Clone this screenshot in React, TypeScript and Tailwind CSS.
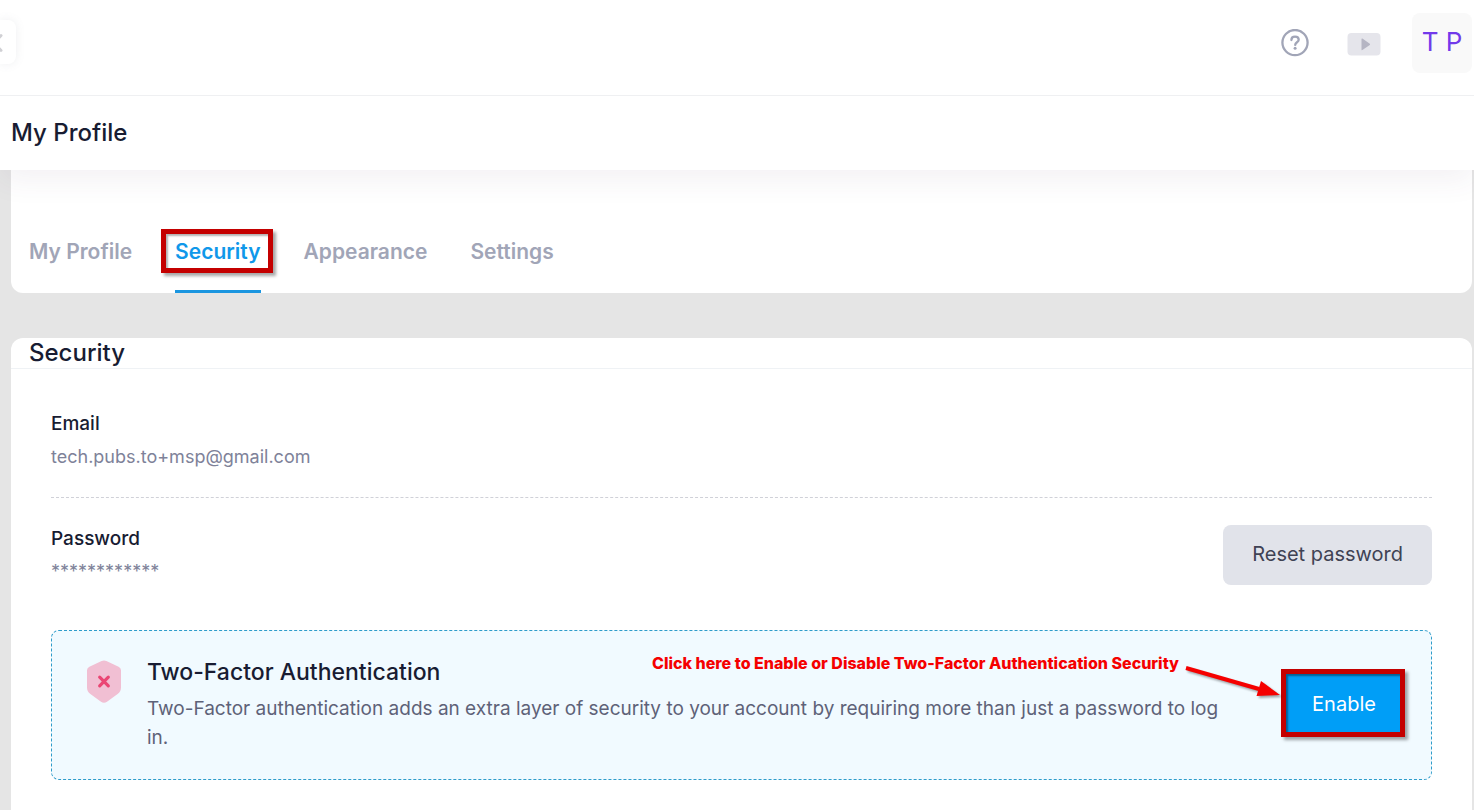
import React, { useState } from 'react';

const TABS = ['My Profile', 'Security', 'Appearance', 'Settings'];

const HelpIcon = () => (
  <svg width="28" height="28" viewBox="0 0 28 28" fill="none" stroke="#a1a5b7" aria-hidden="true">
    <circle cx="14" cy="13.600" r="12.6" strokeWidth="2.3" />
    <path d="M10.4 11c0-2 1.6-3.300 3.6-3.300s3.700 1.200 3.700 3.100c0 2.400-3.500 2.500-3.500 5.100" strokeWidth="2.300" strokeLinecap="round" />
    <circle cx="14.1" cy="19.300" r="1.500" fill="#a1a5b7" stroke="none" />
  </svg>
);

const VideoIcon = () => (
  <svg width="34" height="24" viewBox="0 0 34 24" aria-hidden="true">
    <rect x="0.5" y="1" width="33" height="22.5" rx="4" fill="#e5e5eb" />
    <path d="M14.500 7v10.700c0 .5.5.7.9.4l7.400-5.200c.4-.3.4-.8 0-1.100l-7.400-5.200c-.4-.3-.9-.1-.9.4z" fill="#b5b5c3" />
  </svg>
);

const ShieldIcon = () => (
  <svg width="34" height="44" viewBox="0 0 34 44" className="mt-1 shrink-0" aria-hidden="true">
    <path
      d="M14.6 1.1a6 6 0 0 1 4.8 0l12.2 5.6A4 4 0 0 1 34 10.300V27.500a8 8 0 0 1-3.400 6.500L20 41.700a5.200 5.200 0 0 1-6 0L3.400 34A8 8 0 0 1 0 27.500V10.300a4 4 0 0 1 2.400-3.600z"
      fill="#f1bfd3"
    />
    <path d="M12.700 17.200l8.600 8.600M21.300 17.200l-8.600 8.600" stroke="#ea4674" strokeWidth="3.200" strokeLinecap="round" />
  </svg>
);

const Arrow = () => (
  <svg width="96" height="36" viewBox="0 0 96 36" className="drop-shadow-[2px_2px_1px_rgba(0,0,0,0.35)]" aria-hidden="true">
    <path d="M1 3L74 24" stroke="#f50000" strokeWidth="4" />
    <path d="M76 16L95 30L71.500 31z" fill="#f50000" />
  </svg>
);

const Header: React.FC = () => (
  <header className="relative z-20 flex h-24 items-center justify-between border-b border-[#eff0f2] bg-white">
    <button
      aria-label="Collapse menu"
      className="-mt-3 flex h-11 w-4 items-center justify-start overflow-hidden rounded-r-lg bg-white shadow-[0_0_10px_rgba(113,121,136,0.12)]"
    >
      <svg width="4" height="22" viewBox="0 0 4 22" fill="none" stroke="#d0d0d4" strokeWidth="3" strokeLinecap="round" aria-hidden="true">
        <path d="M1 4.500L-6 12L1 19.500" />
      </svg>
    </button>
    <div className="-mt-2.5 flex items-center pr-0.5">
      <button aria-label="Help">
        <HelpIcon />
      </button>
      <button aria-label="Videos" className="mt-0.5 ml-[38px]">
        <VideoIcon />
      </button>
      <button className="ml-[31px] h-[60px] w-[60px] rounded-lg bg-[#f9f9f9] pb-0.5 text-[26px] whitespace-nowrap text-[#7239ea]">
        T P
      </button>
    </div>
  </header>
);

const App: React.FC = () => {
  const [activeTab, setActiveTab] = useState('Security');
  const [enabled, setEnabled] = useState(false);

  return (
    <div className="flex min-h-screen flex-col bg-[#e5e5e5] font-['Inter',sans-serif] text-[#181c32]">
      <Header />
      <div className="relative z-10 flex h-[74px] items-center bg-white px-[11px] shadow-[0_10px_30px_rgba(82,63,105,0.07)]">
        <h1 className="text-2xl font-medium">My Profile</h1>
      </div>

      <main className="flex grow flex-col gap-[45px] pr-0.5 pl-[11px]">
        <nav className="flex gap-[43px] rounded-b-xl bg-white px-[18px] pt-[42px]">
          {TABS.map((tab) => (
            <div key={tab} className="relative">
              <button
                onClick={() => setActiveTab(tab)}
                className={`h-[81px] border-b-3 pt-0.5 text-[21px] font-semibold ${
                  tab === activeTab ? 'border-[#1b96e0] text-[#0f98ea]' : 'border-transparent text-[#a1a5b7]'
                }`}
              >
                {tab}
              </button>
              {tab === 'Security' && (
                <span className="pointer-events-none absolute top-[17px] -right-3 -left-3.5 h-[44px] border-5 border-[#c40000] shadow-[3px_3px_3px_rgba(0,0,0,0.35),inset_2px_2px_2px_rgba(0,0,0,0.3)]" />
              )}
            </div>
          ))}
        </nav>

        <section className="grow rounded-t-xl bg-white">
          <div className="flex h-[31px] items-center border-b border-[#eff2f5] px-[18px]">
            <h2 className="text-2xl font-medium">Security</h2>
          </div>

          <div className="px-10 pt-[41px] pb-7">
            <div className="border-b border-dashed border-[#d0d1d8] pb-[26px]">
              <h3 className="text-[19px] leading-7 font-medium">Email</h3>
              <p className="mt-[5px] text-lg text-[#7e8299]">tech.pubs.to+msp@gmail.com</p>
            </div>

            <div className="flex items-start justify-between pt-[27px]">
              <div>
                <h3 className="text-[19px] leading-7 font-medium">Password</h3>
                <p className="mt-[5px] text-lg text-[#7e8299]">************</p>
              </div>
              <button className="h-[60px] rounded-lg bg-[#e1e3ea] px-[29px] pb-0.5 text-xl text-[#3f4254]">Reset password</button>
            </div>

            <div className="relative mt-11 flex h-[150px] items-center rounded-lg border border-dashed border-[#2e9cca] bg-[#f1faff] pr-[26px] pb-1 pl-[35px]">
              <div className="flex grow items-start pt-0.5">
                <ShieldIcon />
                <div className="ml-[26px]">
                  <h3 className="text-[23px] leading-8 font-medium">Two-Factor Authentication</h3>
                  <p className="mt-1.5 text-[19px] leading-[29px] text-[#5e6278]">
                    Two-Factor authentication adds an extra layer of security to your account by requiring more than just a
                    password to log in.
                  </p>
                </div>
              </div>
              <button
                onClick={() => setEnabled(!enabled)}
                className="ml-11 h-[68px] w-[124px] shrink-0 border-5 border-[#c40000] bg-[#009ef7] pt-0.5 pl-0.5 text-xl text-white shadow-[3px_3px_3px_rgba(0,0,0,0.35),inset_2px_2px_2px_rgba(0,0,0,0.4)]"
              >
                {enabled ? 'Disable' : 'Enable'}
              </button>
              <div className="pointer-events-none absolute top-5 right-[150px] flex items-start gap-1.5">
                <span className="text-base leading-6 font-extrabold whitespace-nowrap text-[#f50000]">
                  Click here to Enable or Disable Two-Factor Authentication Security
                </span>
                <div className="mt-3.5">
                  <Arrow />
                </div>
              </div>
            </div>
          </div>
        </section>
      </main>
    </div>
  );
};

export default App;
